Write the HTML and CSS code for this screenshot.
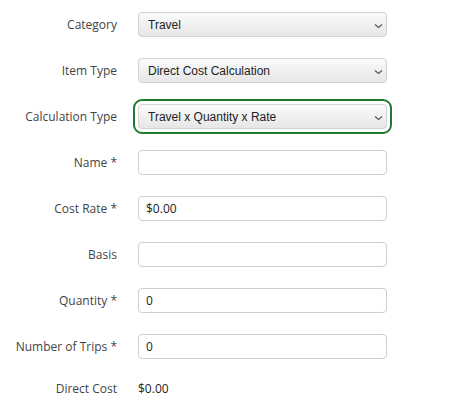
FILE: index.html
```html
<!DOCTYPE html>
<html>
<head>
<meta charset="utf-8">
<link rel="stylesheet" href="styles.css">
</head>
<body>
<form class="form">
  <label class="label">Category</label>
  <div class="select"><span class="select-text">Travel</span><svg class="chev" width="9" height="6" viewBox="0 0 9 6"><path d="M1 1.5 L4.5 4.5 L8 1.5" fill="none" stroke="#555" stroke-width="1.1"/></svg></div>

  <label class="label">Item Type</label>
  <div class="select"><span class="select-text">Direct Cost Calculation</span><svg class="chev" width="9" height="6" viewBox="0 0 9 6"><path d="M1 1.5 L4.5 4.5 L8 1.5" fill="none" stroke="#555" stroke-width="1.1"/></svg></div>

  <label class="label">Calculation Type</label>
  <div class="select focused"><span class="select-text">Travel x Quantity x Rate</span><svg class="chev" width="9" height="6" viewBox="0 0 9 6"><path d="M1 1.5 L4.5 4.5 L8 1.5" fill="none" stroke="#555" stroke-width="1.1"/></svg></div>

  <label class="label">Name *</label>
  <div class="input"></div>

  <label class="label">Cost Rate *</label>
  <div class="input">$0.00</div>

  <label class="label">Basis</label>
  <div class="input"></div>

  <label class="label">Quantity *</label>
  <div class="input">0</div>

  <label class="label">Number of Trips *</label>
  <div class="input">0</div>

  <label class="label last">Direct Cost</label>
  <div class="value last">$0.00</div>
</form>
</body>
</html>
```
FILE: styles.css
```css
html, body {
  margin: 0;
  padding: 0;
  background: #ffffff;
}

.form {
  display: grid;
  grid-template-columns: 117px 249px;
  grid-auto-rows: 25px;
  column-gap: 21px;
  row-gap: 21px;
  padding-top: 12px;
  font-family: "Open Sans", "Liberation Sans", sans-serif;
}

.label {
  display: flex;
  align-items: center;
  justify-content: flex-end;
  font-size: 12px;
  color: #444;
  white-space: nowrap;
}

.select {
  position: relative;
  box-sizing: border-box;
  height: 25px;
  display: flex;
  align-items: center;
  padding-left: 9px;
  border: 1px solid #d2d2d2;
  border-radius: 4px;
  background: linear-gradient(to bottom, #fbfbfb 0%, #e6e6e6 100%);
  font-family: "Liberation Sans", Arial, sans-serif;
  font-size: 12px;
  color: #222;
}

.select.focused {
  outline: 2px solid #1f7a2e;
  outline-offset: 3px;
}

.chev {
  position: absolute;
  right: 3px;
  top: 10px;
}

.input {
  box-sizing: border-box;
  height: 25px;
  display: flex;
  align-items: center;
  padding-left: 7px;
  border: 1px solid #cfcfcf;
  border-radius: 4px;
  background: #fff;
  font-size: 12px;
  color: #222;
}

.value {
  display: flex;
  align-items: center;
  font-size: 12px;
  color: #222;
}

.last {
  height: 17px;
  align-self: start;
}
```
